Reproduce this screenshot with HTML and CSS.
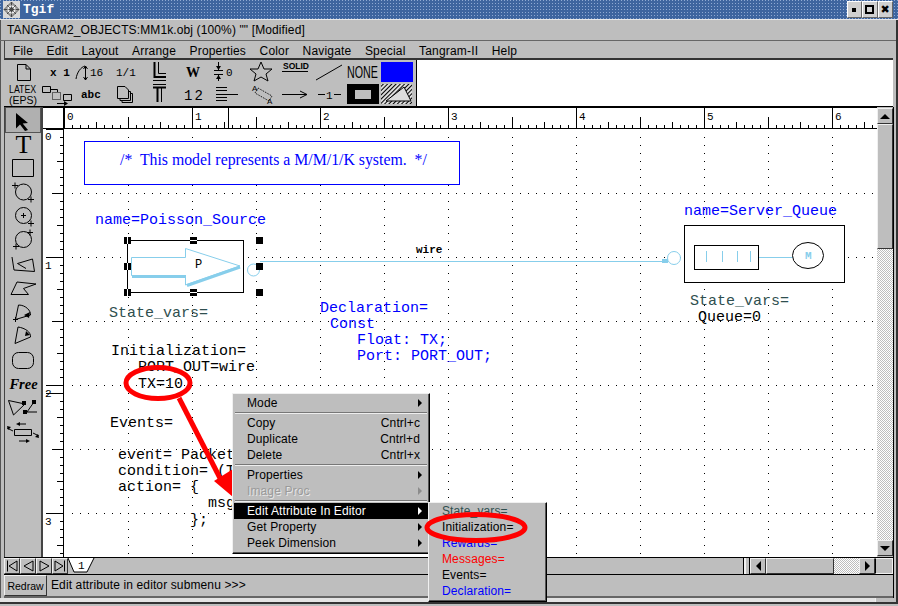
FILE: index.html
```html
<!DOCTYPE html>
<html lang="en">
<head>
    <meta charset="utf-8">
    <title>Tgif</title>
    <link rel="stylesheet" href="styles.css">
</head>
<body>
<div class="window">

    <!-- window manager title -->
    <div class="titlebar">
        <svg class="wm_icon" viewBox="0 0 17 17">
            <rect width="17" height="17" fill="#d8d8d8"/>
            <path d="M8.5 1 16 8.5 8.5 16 1 8.5Z" fill="#a8a8a8" stroke="#666"/>
            <path d="M8.5 1V16M1 8.5H16M4 4 13 13M13 4 4 13" stroke="#444" fill="none"/>
            <circle cx="8.5" cy="8.5" r="3.5" fill="none" stroke="#fff"/>
        </svg>
        <span class="title_name">Tgif</span>
        <span class="wm_buttons">
            <span class="wm_btn"><i class="wm_min"></i></span>
            <span class="wm_btn"><i class="wm_max"></i></span>
            <span class="wm_btn wm_close">✖</span>
        </span>
    </div>

    <div class="frame">
        <div class="filebar">TANGRAM2_OBJECTS:MM1k.obj (100%) "" [Modified]</div>

        <div class="menubar">
            <span>File</span>
            <span>Edit</span>
            <span>Layout</span>
            <span>Arrange</span>
            <span>Properties</span>
            <span>Color</span>
            <span>Navigate</span>
            <span>Special</span>
            <span>Tangram-II</span>
            <span>Help</span>
        </div>

        <div class="toolrow">
            <div class="choices">
                <svg viewBox="6 60 34 23"><path class="ln" d="M17.5 64.500H26L30.500 69V80.500H17.500ZM26 64.500V69H30.500"/></svg>
                <svg viewBox="40 60 34 23"><text class="mono_b" x="50" y="76">x 1</text></svg>
                <svg viewBox="74 60 34 23"><path class="ln" d="M76 79C77 72 81 67 85 66M85.500 66V80M83.500 69 85.500 66 87.500 69M83.500 77 85.500 80 87.500 77"/><text class="mono_s" x="90" y="76">16</text></svg>
                <svg viewBox="108 60 34 23"><text class="mono_s" x="116" y="76">1/1</text></svg>
                <svg viewBox="142 60 34 23"><path class="ln2" d="M154.500 62V77H166"/><path class="ln" d="M158.500 62V73.500H166M153 80.500H166"/></svg>
                <svg viewBox="176 60 34 23"><text class="serif_b" x="186" y="77">W</text></svg>
                <svg viewBox="210 60 34 23"><path class="ln" d="M214 70.500H223M214 74.500H223M218.500 62V70M218.500 75V81"/><path d="M216 66H221L218.500 70ZM216 79H221L218.500 75Z"/><text class="mono_s" x="226" y="76">0</text></svg>
                <svg viewBox="244 60 34 23"><path class="ln" d="M261 62 264 69 272 69 266 74 268 81 261 77 254 81 256 74 250 69 258 69Z"/></svg>
                <svg viewBox="278 60 34 23"><text class="sans_b" x="283" y="69">SOLID</text><rect x="282" y="71" width="26" height="1"/></svg>
                <svg viewBox="312 60 34 23"><path class="ln" d="M316 80 342 65"/></svg>
                <svg viewBox="346 60 34 23"><text class="sans" transform="translate(347 78) scale(0.63 1)" font-size="17">NONE</text></svg>
                <svg viewBox="380 60 34 23"><rect x="381" y="62" width="32" height="20" fill="#0000ff"/></svg>

                <svg viewBox="6 83 34 23"><text class="sans" transform="translate(9 93) scale(0.8 1)" font-size="11">LATEX</text><text class="sans" x="9" y="104" font-size="10.500">(EPS)</text></svg>
                <svg viewBox="40 83 34 23"><path class="ln" d="M42.500 86.500H50.500V92.500H42.500ZM50.500 89.500H57.500V92M63.500 94.500H71.500V100.500H63.500ZM57 103.500H66"/><path class="ln" stroke-dasharray="1 1" d="M52.500 92.500H60.500V99.500H52.500Z"/><path d="M64 101 68 103.500 64 106Z"/></svg>
                <svg viewBox="74 83 34 23"><text class="mono_b" x="81" y="98">abc</text></svg>
                <svg viewBox="108 83 34 23"><path class="ln" d="M117.500 86.500H125L128.500 90V98.500H117.500ZM128.500 91.500H130.500V100.500H120V98.500M130.500 93.500H132.500V102.500H122V100.500"/></svg>
                <svg viewBox="142 83 34 23"><path class="ln" d="M153 84.500H166M161.500 88V102"/><path class="ln2" d="M153 87.500H166M157.500 88V102"/></svg>
                <svg viewBox="176 83 34 23"><text class="mono" x="184" y="100" font-size="14" letter-spacing="2">12</text></svg>
                <svg viewBox="210 83 34 23"><path class="ln" d="M216 87.500H227M216 90.500H227M216 94.500H238M216 97.500H227M216 100.500H227"/></svg>
                <svg viewBox="244 83 34 23"><text class="sans" x="252" y="91" font-size="8">A</text><path class="ln" stroke-dasharray="1 1" d="M258 88 272 96 269 101 255 93Z"/><text class="sans" x="267" y="104" font-size="8">A</text></svg>
                <svg viewBox="278 83 34 23"><path class="ln" d="M282 94.500H307M300 91 307 94.500 300 98"/></svg>
                <svg viewBox="312 83 34 23"><path class="ln" d="M318 94.500H325M334 94.500H341"/><text class="mono_s" x="326" y="99">1</text></svg>
                <svg viewBox="346 83 34 23"><rect x="347" y="84" width="32" height="20"/><rect x="355" y="90" width="16" height="9" fill="#bebebe"/></svg>
                <svg viewBox="380 83 34 23">
                    <defs>
                        <pattern id="hatch" width="3" height="3" patternUnits="userSpaceOnUse" patternTransform="rotate(45)"><rect width="3" height="3" fill="#dcdcdc"/><rect width="1" height="3" fill="#000"/></pattern>
                    </defs>
                    <rect x="381" y="84" width="31" height="20" fill="url(#hatch)"/>
                    <path d="M386 101 404 87 411 101Z" fill="#dcdcdc" stroke="#000"/>
                </svg>
            </div>
            <div class="msgbox"></div>
        </div>

        <div class="workarea">
            <div class="tools">
                <svg class="tool_on" viewBox="6 108 34 24"><path d="M16 113 28 123 22.700 123.500 28 130 25 131 20 124.500 16 128.500Z"/></svg>
                <span class="tool_t">T</span>
                <svg viewBox="6 156 34 24"><path class="ln" d="M12.500 159.500H33.500V176.500H12.500Z"/></svg>
                <svg viewBox="6 180 34 24"><circle class="ln" cx="23.500" cy="192" r="8"/><path class="ln" d="M12 185.500H18M15 182.500V188.500M28 199.500H34M31 196.500V202.500"/></svg>
                <svg viewBox="6 204 34 24"><circle class="ln" cx="23.500" cy="215.500" r="8"/><path class="ln" d="M21 215.500H26M23.500 213V218M28 223.500H34M31 220.500V226.500"/></svg>
                <svg viewBox="6 228 34 24"><circle class="ln" cx="23.500" cy="239.500" r="8"/><path class="ln" d="M27 232.500H33M30 229.500V235.500M13 246.500H19M16 243.500V249.500"/></svg>
                <svg viewBox="6 252 34 24"><path class="ln" d="M12 257 14 270 34.500 271.500 32.500 259 17.500 263.500 26 268.500"/></svg>
                <svg viewBox="6 276 34 24"><path class="ln" d="M17 282 36 284 23.500 288.500 28.500 294.500 11 294.500Z"/></svg>
                <svg viewBox="6 300 34 24"><path class="ln" d="M18.500 305C26 305 31 311 30.500 315L15.500 319.500Z"/><path d="M24 315 30 312 29 318Z"/><path class="ln" d="M13 319.500H18M15.500 317V322"/></svg>
                <svg viewBox="6 324 34 24"><path class="ln" d="M18 327C25 328 31 332 30.500 337L15 343.500Z"/><path d="M26 331 30 335 25 336Z"/></svg>
                <svg viewBox="6 348 34 24"><rect class="ln" x="12.500" y="352.500" width="21" height="16" rx="6"/></svg>
                <span class="tool_free">Free</span>
                <svg viewBox="6 396 34 24"><path class="ln" d="M8.500 400.500 25 404 13.500 415ZM27 412 34 402M27 412H37"/><rect x="22" y="401" width="4" height="4"/><rect x="32" y="400" width="4" height="4"/><rect x="23" y="410" width="4" height="4"/></svg>
                <svg viewBox="6 420 34 24"><path class="ln" d="M14.500 429.500H31.500V435.500H14.500ZM7 428 13 431M39 436 33 433M20 424H26M19 441H26"/><path d="M7 426 11 427 8 430ZM39 438 35 437 38 434ZM20 422V426L16 424ZM26 443V439L30 441Z"/></svg>
            </div>

            <div class="board">
                <div class="corner"></div>
                <svg class="ruler_top" viewBox="64 107 813 22">
                    <defs>
                        <pattern id="tickX" x="64" y="107" width="128" height="22" patternUnits="userSpaceOnUse">
                            <path d="M.5 1V21M8.500 18V21M16.500 18V21M24.500 18V21M32.500 15V21M40.500 18V21M48.500 18V21M56.500 18V21M64.500 10V21M72.500 18V21M80.500 18V21M88.500 18V21M96.500 15V21M104.500 18V21M112.500 18V21M120.500 18V21" stroke="#000"/>
                        </pattern>
                    </defs>
                    <rect x="64" y="107" width="813" height="22" fill="url(#tickX)"/>
                    <rect x="64" y="107" width="813" height="1"/>
                    <rect x="64" y="128" width="813" height="1"/>
                    <rect x="228" y="108" width="1" height="21"/>
                    <text class="ruler_num" x="67" y="120">0</text>
                    <text class="ruler_num" x="195" y="120">1</text>
                    <text class="ruler_num" x="323" y="120">2</text>
                    <text class="ruler_num" x="451" y="120">3</text>
                    <text class="ruler_num" x="579" y="120">4</text>
                    <text class="ruler_num" x="707" y="120">5</text>
                    <text class="ruler_num" x="835" y="120">6</text>
                </svg>
                <svg class="ruler_left" viewBox="43 129 21 428">
                    <defs>
                        <pattern id="tickY" x="43" y="129" width="21" height="128" patternUnits="userSpaceOnUse">
                            <path d="M3 .5H20M17 8.500H20M17 16.500H20M17 24.500H20M14 32.500H20M17 40.500H20M17 48.500H20M17 56.500H20M9 64.500H20M17 72.500H20M17 80.500H20M17 88.500H20M14 96.500H20M17 104.500H20M17 112.500H20M17 120.500H20" stroke="#000"/>
                        </pattern>
                    </defs>
                    <rect x="43" y="129" width="21" height="428" fill="url(#tickY)"/>
                    <rect x="63" y="129" width="1" height="428"/>
                    <rect x="46" y="393" width="18" height="1"/>
                    <text class="ruler_num" x="45" y="140">0</text>
                    <text class="ruler_num" x="45" y="269">1</text>
                    <text class="ruler_num" x="45" y="397">2</text>
                    <text class="ruler_num" x="45" y="525">3</text>
                </svg>

                <!-- drawing canvas, in page coordinates -->
                <svg class="canvas" viewBox="64 129 813 428">
                    <defs>
                        <pattern id="grid" x="64" y="129" width="64" height="64" patternUnits="userSpaceOnUse">
                            <path d="M0 0h1v1H0zM8 0h1v1H8zM16 0h1v1h-1zM24 0h1v1h-1zM32 0h1v1h-1zM40 0h1v1h-1zM48 0h1v1h-1zM56 0h1v1h-1zM0 8h1v1H0zM0 16h1v1H0zM0 24h1v1H0zM0 32h1v1H0zM0 40h1v1H0zM0 48h1v1H0zM0 56h1v1H0z"/>
                        </pattern>
                    </defs>
                    <rect x="65" y="130" width="812" height="427" fill="url(#grid)"/>

                    <rect class="blue_ln" x="84.500" y="141.500" width="375" height="43"/>
                    <text class="note" x="120" y="165">/*  This model represents a M/M/1/K system.  */</text>

                    <text class="attr blue" x="95" y="224">name=Poisson_Source</text>
                    <rect class="black_ln" x="127.500" y="240.500" width="116" height="52"/>
                    <path class="sky_fill" d="M131.500 257.500H185.500V248.500L240 266 185.500 285V275.500H131.500Z"/>
                    <path class="sky_thick" d="M132 276.500H186M187 285.500 240 267"/>
                    <text class="attr small" x="195" y="268">P</text>
                    <path class="sky_ln" d="M260 261.500H666"/>
                    <circle class="sky_fill" cx="253.500" cy="270" r="6"/>
                    <rect x="124" y="237" width="7" height="7"/>
                    <rect x="190" y="237" width="7" height="7"/>
                    <rect x="256" y="237" width="7" height="7"/>
                    <rect x="124" y="263" width="7" height="7"/>
                    <rect x="256" y="263" width="7" height="7"/>
                    <rect x="124" y="289" width="7" height="7"/>
                    <rect x="190" y="289" width="7" height="7"/>
                    <rect x="256" y="289" width="7" height="7"/>
                    <path d="M127.500 237v7M127.500 263v7M127.500 289v7M190 240.500h7M190 292.500h7" stroke="#fff" fill="none"/>

                    <text class="wire" x="416" y="253">wire</text>
                    <text class="attr slate" x="109" y="317">State_vars=</text>

                    <text class="attr blue" x="320" y="312">Declaration=</text>
                    <text class="attr blue" x="330" y="328">Const</text>
                    <text class="attr blue" x="357" y="344">Float: TX;</text>
                    <text class="attr blue" x="357" y="360">Port: PORT_OUT;</text>

                    <text class="attr" x="111" y="355">Initialization=</text>
                    <text class="attr" x="138" y="371">PORT_OUT=wire</text>
                    <text class="attr" x="138" y="388">TX=10</text>
                    <text class="attr" x="110" y="427">Events=</text>
                    <text class="attr" x="118" y="459">event= Packet</text>
                    <text class="attr" x="118" y="475">condition= (T</text>
                    <text class="attr" x="118" y="491">action= {</text>
                    <text class="attr" x="208" y="507">msg</text>
                    <text class="attr" x="190" y="524">};</text>

                    <text class="attr blue" x="684" y="215">name=Server_Queue</text>
                    <rect x="662" y="259" width="6" height="4" fill="#87ceeb"/>
                    <circle class="sky_fill" cx="674" cy="258" r="6.500"/>
                    <rect class="black_ln" x="684.500" y="225.500" width="160" height="57"/>
                    <rect class="black_ln" x="694.500" y="245.500" width="64" height="24"/>
                    <path class="sky_ln" d="M706.500 251V262M722.500 251V262M737.500 251V262M750.500 251V262M759 257.500H793"/>
                    <ellipse class="black_ln" cx="808" cy="255.500" rx="15.500" ry="13"/>
                    <text class="motif" x="805" y="259">M</text>
                    <text class="attr slate" x="690" y="305">State_vars=</text>
                    <text class="attr" x="698" y="321">Queue=0</text>

                    <!-- red callouts -->
                    <ellipse class="red_ln" cx="158" cy="383" rx="32" ry="15.500"/>
                    <path class="red_ln" d="M179 398 222 482"/>
                    <path d="M233 497 214 481 233 469Z" fill="#ff0000"/>
                </svg>
            </div>

            <div class="vscroll">
                <div class="btn"><i class="tri_up"></i></div>
                <div class="vthumb"></div>
                <div class="trough"></div>
                <div class="btn"><i class="tri_down"></i></div>
            </div>
        </div>

        <div class="navbar">
            <div class="btn nav_btn"><svg viewBox="0 0 14 14"><path class="ln" d="M2.500 1.500V12.500M12 2 4 7 12 12Z"/></svg></div>
            <div class="btn nav_btn"><svg viewBox="0 0 14 14"><path class="ln" d="M12 2 3 7 12 12Z"/></svg></div>
            <div class="btn nav_btn"><svg viewBox="0 0 14 14"><path class="ln" d="M3 2 12 7 3 12Z"/></svg></div>
            <div class="btn nav_btn"><svg viewBox="0 0 14 14"><path class="ln" d="M11.500 1.500V12.500M2 2 10 7 2 12Z"/></svg></div>
            <svg class="tab" viewBox="0 0 28 16"><path d="M0 0 6 14H19L26 0" fill="#fff" stroke="#000"/><text class="mono_s" x="10" y="11">1</text></svg>
            <div class="nav_fill"></div>
            <div class="grip"></div>
            <div class="btn"><i class="tri_left"></i></div>
            <div class="hthumb"></div>
            <div class="trough"></div>
            <div class="btn"><i class="tri_right"></i></div>
            <div class="nav_corner"></div>
        </div>

        <div class="statusbar">
            <div class="redraw">Redraw</div>
            <div class="status_msg">Edit attribute in editor submenu &gt;&gt;&gt;</div>
        </div>
        <div class="bottom_strip"><span></span><span class="bottom_end"></span></div>
    </div>

    <!-- popup menu and its submenu -->
    <div class="menu">
        <div class="item has_sub">Mode</div>
        <div class="sep"></div>
        <div class="item"><span>Copy</span><span>Cntrl+c</span></div>
        <div class="item"><span>Duplicate</span><span>Cntrl+d</span></div>
        <div class="item"><span>Delete</span><span>Cntrl+x</span></div>
        <div class="sep"></div>
        <div class="item has_sub">Properties</div>
        <div class="item has_sub disabled">Image Proc</div>
        <div class="sep"></div>
        <div class="item has_sub active">Edit Attribute In Editor</div>
        <div class="item has_sub">Get Property</div>
        <div class="item has_sub">Peek Dimension</div>
    </div>
    <div class="submenu">
        <div class="sub_item slate_c">State_vars=</div>
        <div class="sub_item">Initialization=</div>
        <div class="sub_item blue_c">Rewards=</div>
        <div class="sub_item red_c">Messages=</div>
        <div class="sub_item">Events=</div>
        <div class="sub_item blue_c">Declaration=</div>
    </div>
    <svg class="callout" viewBox="420 510 120 36"><ellipse class="red_ln" cx="476" cy="527.500" rx="49" ry="13"/></svg>
</div>
</body>
</html>
```

FILE: styles.css
```css
* {
    box-sizing: border-box;
}

body {
    margin: 0;
    background: #bebebe;
    font-family: "Liberation Sans", Arial, sans-serif;
    font-size: 12px;
    letter-spacing: 0.12px;
    color: #000;
}

svg {
    display: block;
    letter-spacing: 0;
}

.window {
    position: relative;
    width: 898px;
    height: 606px;
    background: #bebebe;
    overflow: hidden;
}

/* Title bar */
.titlebar {
    display: flex;
    align-items: center;
    height: 20px;
    padding: 1px 5px 1px 3px;
    background: conic-gradient(at 1px 1px, #3e659f 75%, #8fa9d2 0) 0 0 / 3px 3px;
    border-bottom: 1px solid #e8e8e8;
}

.wm_icon {
    width: 17px;
    height: 17px;
    flex: none;
}

.title_name {
    padding: 0 4px 0 3px;
    height: 18px;
    line-height: 18px;
    background: #3e659f;
    color: #fff;
    font-family: "Liberation Mono", monospace;
    font-size: 13px;
    font-weight: bold;
    letter-spacing: 0;
}

.wm_buttons {
    display: flex;
    margin-left: auto;
}

.wm_btn {
    display: flex;
    align-items: center;
    justify-content: center;
    width: 15.500px;
    height: 17px;
    background: #d0d0d0;
    border: 1px solid;
    border-color: #fff #666 #666 #fff;
}

.wm_min {
    width: 4px;
    height: 4px;
    background: #000;
}

.wm_max {
    width: 9px;
    height: 9px;
    border: 2px solid #000;
}

.wm_close {
    font-size: 11px;
    font-family: "DejaVu Sans", sans-serif;
}

/* Main frame */
.frame {
    padding: 0 3px 0 4px;
    border-right: 2px solid #333;
    box-shadow: inset 1px 0 0 #555;
}

.filebar {
    height: 21px;
    margin-left: -4px;
    margin-right: -3px;
    padding: 3px 0 0 7px;
    line-height: 15px;
    border-bottom: 1px solid #666;
}

.menubar {
    display: flex;
    gap: 13.500px;
    height: 19px;
    padding: 2px 0 0 8px;
    line-height: 16px;
    letter-spacing: 0.18px;
    border-left: 1px solid #444;
    border-bottom: 2px solid #333;
}

.toolrow {
    display: flex;
    height: 47px;
}

.choices {
    display: grid;
    grid-template-columns: repeat(12, 34px);
    grid-template-rows: repeat(2, 23px);
    align-content: start;
    width: 412px;
    padding-left: 2px;
    border-bottom: 1px solid #000;
}

.choices svg {
    width: 34px;
    height: 23px;
}

.msgbox {
    flex: 1;
    background: #fff;
    border-left: 1px solid #000;
    border-bottom: 1px solid #000;
}

/* Shared svg parts */
.ln {
    fill: none;
    stroke: #000;
}

.ln2 {
    fill: none;
    stroke: #000;
    stroke-width: 2;
}

.mono,
.mono_s,
.mono_b {
    font-family: "Liberation Mono", monospace;
}

.mono_s {
    font-size: 11px;
}

.mono_b {
    font-size: 11px;
    font-weight: bold;
}

.serif_b {
    font-family: "Liberation Serif", serif;
    font-size: 14px;
    font-weight: bold;
}

.sans {
    font-family: "Liberation Sans", sans-serif;
}

.sans_b {
    font-family: "Liberation Sans", sans-serif;
    font-size: 8.500px;
    font-weight: bold;
}

/* Work area */
.workarea {
    display: flex;
    height: 450px;
    box-shadow: 1px 0 0 #000;
}

.tools {
    display: flex;
    flex-direction: column;
    width: 39px;
    flex: none;
    padding: 1px 0 0 1px;
    border-left: 1px solid #444;
    border-right: 2px solid #444;
}

.tools svg {
    width: 34px;
    height: 24px;
    flex: none;
}

.tool_on {
    outline: 1px solid #555;
    background: #b0b0b0;
    box-shadow: 1px 1px 0 #f0f0f0;
}

.tool_t,
.tool_free {
    display: block;
    height: 24px;
    flex: none;
    text-align: center;
    letter-spacing: 0;
}

.tool_t {
    font-family: "Liberation Serif", serif;
    font-size: 26px;
    line-height: 25px;
}

.tool_free {
    font-family: "Liberation Serif", serif;
    font-style: italic;
    font-weight: bold;
    font-size: 14.500px;
    line-height: 24px;
}

.board {
    display: grid;
    grid-template-columns: 21px 813px;
    grid-template-rows: 22px 428px;
    flex: none;
}

.corner {
    background: #fff;
    border-top: 1px solid #000;
    border-right: 1px solid #000;
    border-bottom: 1px solid #000;
}

.ruler_top {
    width: 813px;
    height: 22px;
    background: #fff;
}

.ruler_left {
    width: 21px;
    height: 428px;
    background: #fff;
}

.ruler_num {
    font-family: "Liberation Mono", monospace;
    font-size: 11px;
}

.canvas {
    width: 813px;
    height: 428px;
    background: #fff;
}

.blue_ln {
    fill: #fff;
    stroke: #0000ff;
}

.black_ln {
    fill: #fff;
    stroke: #000;
}

.sky_ln {
    fill: none;
    stroke: #87ceeb;
}

.sky_fill {
    fill: #fff;
    stroke: #87ceeb;
}

.sky_thick {
    fill: none;
    stroke: #87ceeb;
    stroke-width: 3;
}

.red_ln {
    fill: none;
    stroke: #ff0000;
    stroke-width: 5;
}

.note {
    font-family: "Liberation Serif", serif;
    font-size: 15.800px;
    fill: #0000ff;
    white-space: pre;
}

.attr {
    font-family: "Liberation Mono", monospace;
    font-size: 15px;
    fill: #000;
}

.attr.small {
    font-size: 12px;
}

.blue {
    fill: #0000ff;
}

.slate {
    fill: #2f4f4f;
}

.wire {
    font-family: "Liberation Mono", monospace;
    font-size: 11px;
    font-weight: bold;
}

.motif {
    font-family: "Liberation Mono", monospace;
    font-size: 11px;
    font-weight: bold;
    fill: #87ceeb;
}

/* Scrollbars */
.vscroll {
    display: flex;
    flex-direction: column;
    width: 16px;
    flex: none;
    padding: 1px 0;
}

.btn {
    display: flex;
    align-items: center;
    justify-content: center;
    width: 16px;
    height: 16px;
    flex: none;
    background: #bebebe;
    border: 1px solid;
    border-color: #f0f0f0 #333 #333 #f0f0f0;
}

.vthumb {
    height: 125px;
    flex: none;
    background: #bebebe;
    border: 1px solid;
    border-color: #f0f0f0 #333 #333 #f0f0f0;
}

.trough {
    flex: 1;
    background: repeating-conic-gradient(#fff 0 25%, #bebebe 0 50%) 0 0 / 2px 2px;
}

.tri_up,
.tri_down,
.tri_left,
.tri_right {
    width: 0;
    height: 0;
    border: 5px solid transparent;
}

.tri_up {
    border-top: 0;
    border-bottom-color: #000;
}

.tri_down {
    border-bottom: 0;
    border-top-color: #000;
}

.tri_left {
    border-left: 0;
    border-right-color: #000;
}

.tri_right {
    border-right: 0;
    border-left-color: #000;
}

.navbar {
    display: flex;
    align-items: stretch;
    height: 18px;
    border-top: 1px solid #000;
    border-bottom: 1px solid #000;
    box-shadow: 1px 0 0 #000;
}

.nav_btn {
    width: 16px;
}

.nav_btn svg {
    width: 14px;
    height: 14px;
}

.tab {
    width: 28px;
    height: 16px;
    flex: none;
}

.nav_fill {
    flex: 1;
}

.grip {
    width: 7px;
    border-left: 1px solid #000;
    border-right: 1px solid #000;
    background: linear-gradient(90deg, #f0f0f0 0 2px, #bebebe 2px);
}

.hthumb {
    width: 68px;
    flex: none;
    border: 1px solid;
    border-color: #f0f0f0 #333 #333 #f0f0f0;
}

.navbar .trough {
    flex: none;
    width: 25px;
}

.nav_corner {
    width: 18px;
    flex: none;
    border: 1px solid;
    border-color: #f0f0f0 #f0f0f0 #f0f0f0 #000;
}

.statusbar {
    display: flex;
    height: 23px;
    border-bottom: 2px solid #666;
    box-shadow: 1px 0 0 #000;
}

.redraw {
    width: 43px;
    flex: none;
    padding-top: 4px;
    font-size: 10.500px;
    text-align: center;
    letter-spacing: 0;
    border: 1px solid;
    border-color: #f0f0f0 #333 #333 #f0f0f0;
}

.status_msg {
    padding: 3px 0 0 4px;
    line-height: 15px;
}

.bottom_strip {
    display: flex;
    height: 6px;
    margin-left: -4px;
    margin-right: -3px;
    border-bottom: 2px solid #333;
}

.bottom_strip span {
    flex: 1;
    background: #e4e4e4;
}

.bottom_strip .bottom_end {
    flex: none;
    width: 21px;
    background: #bebebe;
    border-left: 1px solid #f0f0f0;
}

/* Popup menus */
.menu,
.submenu {
    position: absolute;
    background: #bebebe;
    border: 1px solid;
    border-color: #f0f0f0 #000 #000 #f0f0f0;
    box-shadow: inset -1px -1px 0 #555;
}

.menu {
    left: 232px;
    top: 393px;
    width: 198px;
    height: 161px;
    padding: 1px;
}

.submenu {
    left: 428px;
    top: 502px;
    width: 119px;
    height: 100px;
    padding: 0 0 0 13px;
}

.item {
    display: flex;
    justify-content: space-between;
    height: 16px;
    line-height: 16px;
    padding: 0 8px 0 13px;
}

.has_sub {
    position: relative;
}

.has_sub::after {
    content: "";
    position: absolute;
    right: 6px;
    top: 4px;
    border: 4px solid transparent;
    border-right: 0;
    border-left-color: #000;
}

.disabled {
    color: #9a9a9a;
    text-shadow: 1px 1px 0 #e8e8e8;
}

.disabled::after {
    border-left-color: #8c8c8c;
}

.active {
    background: #000;
    color: #fff;
}

.active::after {
    border-left-color: #fff;
}

.sep {
    height: 2px;
    margin: 1px;
    border-top: 1px solid #777;
    border-bottom: 1px solid #eee;
}

.sub_item {
    height: 16px;
    line-height: 16px;
}

.slate_c {
    color: #2f4f4f;
}

.blue_c {
    color: #0000ff;
}

.red_c {
    color: #ff0000;
}

.callout {
    position: absolute;
    left: 420px;
    top: 510px;
    width: 120px;
    height: 36px;
}
```
